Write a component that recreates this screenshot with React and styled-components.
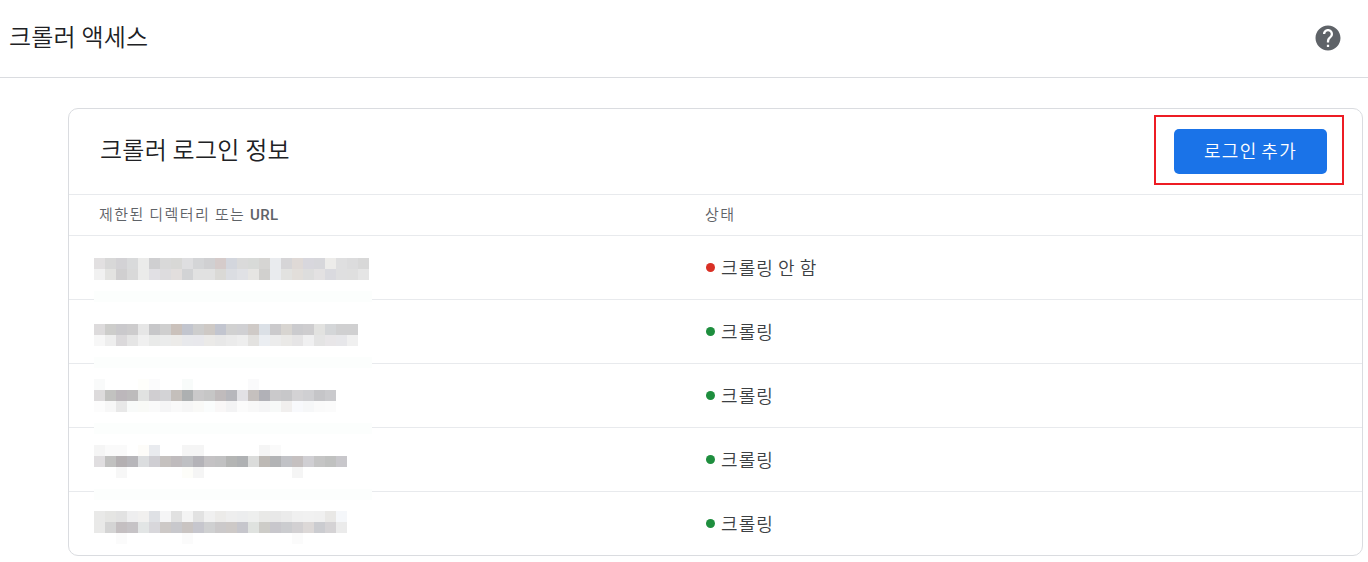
import styled, { createGlobalStyle } from "styled-components";


const GlobalStyle = createGlobalStyle`
  * {
    box-sizing: border-box;
  }
  body {
    margin: 0;
    background: #ffffff;
    color: #202124;
    font-family: "Noto Sans CJK KR", sans-serif;
    font-weight: 350;
    overflow: hidden;
  }
`;

const Pagina = styled.div`
  width: 1368px;
  height: 562px;
`;

const Header = styled.header`
  display: flex;
  align-items: center;
  justify-content: space-between;
  height: 78px;
  padding: 0 25px 2px 9px;
  border-bottom: 1px solid #dadce0;
`;

const Title = styled.h1`
  margin: 0;
  padding-bottom: 4px;
  font-size: 24px;
  font-weight: 350;
  line-height: 36px;
  letter-spacing: 0.2px;
`;

const HelpButton = styled.button`
  display: flex;
  width: 30px;
  height: 30px;
  padding: 0;
  border: none;
  background: none;
`;

const Card = styled.section`
  width: 1295px;
  height: 448px;
  margin: 30px 0 0 68px;
  border: 1px solid #dadce0;
  border-radius: 10px;
`;

const CardHeader = styled.div`
  display: flex;
  align-items: center;
  justify-content: space-between;
  height: 86px;
  padding: 0 18px 0 31px;
  border-bottom: 1px solid #e8eaed;
`;

const CardTitle = styled(Title).attrs({ as: "h2" })`
  padding-bottom: 5px;
  letter-spacing: 0.25px;
`;

const Highlight = styled.div`
  display: flex;
  align-items: center;
  justify-content: center;
  width: 190px;
  height: 70px;
  margin-top: -3px;
  padding: 2px 0 0 3px;
  border: 2px solid #ed1c24;
`;

const AddButton = styled.button`
  width: 153px;
  height: 45px;
  padding: 0 0 2px;
  border: none;
  border-radius: 5px;
  background: #1a73e8;
  color: #ffffff;
  font-family: inherit;
  font-size: 18px;
  font-weight: 350;
  letter-spacing: 1.3px;
  word-spacing: -1.5px;
`;

const Row = styled.div`
  display: grid;
  grid-template-columns: 606px 1fr;
  align-items: center;
  height: 64px;
  padding-left: 30px;
  border-bottom: 1px solid #e8eaed;
  &:last-child {
    height: 63px;
    border-bottom: none;
  }
`;

const HeadRow = styled(Row)`
  height: 41px;
  padding-bottom: 4px;
  color: #5f6368;
  font-size: 15px;
  letter-spacing: 1.4px;
`;

const Latin = styled.span`
  font-family: Roboto, sans-serif;
  font-weight: 500;
  letter-spacing: 0.4px;
`;

const UrlCell = styled.div`
  position: relative;
  align-self: stretch;
`;

/* hidden url, it spills over the divider below the row */
const Mosaic = styled.svg`
  position: absolute;
  top: ${(props) => props.$top}px;
  left: -5px;
`;

const Status = styled.div`
  display: flex;
  align-items: center;
  gap: 6px;
  padding: 0 0 1px 1px;
  color: #3c4043;
  font-size: 18px;
  line-height: 26px;
  letter-spacing: 1.1px;
  word-spacing: -1px;
`;

const StatusText = styled.span`
  padding-bottom: 1px;
`;

const Dot = styled.span`
  width: 9px;
  height: 9px;
  border-radius: 50%;
  background: ${(props) => (props.$active ? "#1e8e3e" : "#d93025")};
`;

const CELL = 11;

const rows = [
  {
    active: false,
    blocks: [
      "",
      "e2e0e1 d8d8d8 d3d2d5 d9dadb ebebea cfcfd1 d9d9d9 d8d8d6 dedee0 d4d5d7 d0d0d2 d5cbca d3d6dd dadada d8dad8 d6d5d3 e9ebee d6d5d7 dfd9d6 d8d7dd d7d7db edecea dfdfe0 dcdcdd d8d8d8",
      "f1f1f1 e3e3e1 d0cfd0 d9d9d9 ebebea e1e0e4 dddcde e2dedd d2d3d5 e1e1e1 e1e1e1 dad9d6 dbdde2 e0e1e5 e6e5e3 d1d0ce e9ebee e2e2e0 e2deda dddddd e3e1e2 dadadf dfdfe0 dfdfdf e5e5e5",
    ],
  },
  {
    active: true,
    blocks: [
      "",
      "dddbdc cdcdcb cac9cc cdcccd e6e6e6 c7c7c9 cfcfcf cac1bb c2c5ce cdcdcd cec9c5 c2c5cf d1d1d1 d0d0d3 cfcac7 dbe0e6 cbcacc d8d5d1 cbcbce cecdcf e2e2e0 d4d6d8 d0d0d1 d0d0d1",
      "f7f7f7 eeeeee dbd9db e5e5e5 f0f0f0 e9eae9 ebecec ecebe9 e8e9ec e8e8ec ebeae8 e8e8e8 ebebeb eeeeee e3e2e0 ebeef2 ececec eae9e7 e6e5e6 f0f0f1 e4e4e4 e8e6e8 e7e7ea f0f0f0",
    ],
  },
  {
    active: true,
    blocks: [
      "f9fafa - - - fefefb fbfbfc - - f8fbfa - - - - - fafafb",
      "dddbdc c2c2c0 bcb7bb bdbbbc e1e2e1 d0ced1 d3d3d6 c4bfbb adb0b1 cac9ca c6c6c6 c0bbbc b7b7bc e2e1e5 c5c0be b1b1b7 cac9cb c7c7c9 d3d2d4 cfcfd2 c5c5c8 cacacd",
      "fcfcfc f7f7f7 e8e8e8 f8faf9 f9faf7 fafafa f5f5f6 f9f9f9 f6f6f6 f9f9f7 fafcfc f9f7f7 f3f3f4 fbfbfb f8f8f8 f5f5f6 f7f9f8 f1efee f8f9fc f6f7f8 fafafa fbfbfb",
    ],
  },
  {
    active: true,
    blocks: [
      "f5f5f5 fafafa fafafa - fdfcf9 e9ebef - - f5f5f5 f5f5f5 - - - - - f5f5f5 fafafa",
      "e0dee0 c1c1c0 b4b0b2 b7b6ba dbdddf cfced3 c5c1bf bfbbbd bfc0c3 b4b3b8 c4c2c4 c1c1c2 b4b5b4 afb1b3 dbdcdb bdb9b5 b2b3b5 c1c2c6 c5c0c0 d0cfd3 c5c5c5 c0c1c0 c8c7cb",
      "- - f7f7f7 - - - - - fdfdf9 f5f5f5 - - - - - - - - f5f5f5",
    ],
  },
  {
    active: true,
    blocks: [
      "e9e9e8 e5e5e3 e2e2e2 eeeeef f1f0ef dfe1e5 f5f5f6 e1e1e1 f4f4f4 e2e2e2 f0f0f0 ecebe9 eeeeee ecedee eeefee e9e9e7 e8e8e8 ebebeb f0f0f0 f1f1f1 f0f0f0 e9e8e6 f5f7fa",
      "e9e9e8 d4d4d4 c4bfc1 c6c3c6 e2e5e5 d8d7db cdc9c7 c8c8cc c9c4c2 c6c6cd cfd0d1 cbc9ca cdc9c7 c6c6cc dfe2df cdccc8 c8c7cc cbcccf d2d0d2 dcd8d7 cbccd0 d5d3d5 ebebeb",
      "- - fbfbfb - - - - - fbfbfb - - - - - - - - - fbfbfb",
    ],
  },
];

function HelpIcon() {
  return (
    <svg width="30" height="30" viewBox="0 0 24 24" fill="#5f6368">
      <path d="M12 2C6.48 2 2 6.48 2 12s4.48 10 10 10 10-4.48 10-10S17.52 2 12 2zm.9 17.2h-1.8v-1.9h1.8v1.9zm2.17-7.95l-.9.92C13.35 13 12.9 13.6 12.9 15.6h-1.8v-.6c0-1.4.35-2.4 1.07-3.13l1.24-1.26c.45-.45.79-1.06.79-1.81 0-1.2-1-2.2-2.2-2.2s-2.2 1-2.2 2.2H8c0-2.21 1.79-4 4-4s4 1.79 4 4c0 .98-.36 1.88-.93 2.45z" />
    </svg>
  );
}

function HiddenUrl({ blocks, index }) {
  const last = index === rows.length - 1;

  return (
    <Mosaic $top={CELL + index * 2} width="278" height={last ? 33 : 55} shapeRendering="crispEdges">
      {!last && <rect y="44" width="278" height="11" fill="#fcfefd" />}
      {blocks.map((line, y) =>
        line.split(" ").map((color, x) =>
          color && color !== "-" ? (
            <rect key={`${x}-${y}`} x={x * CELL} y={y * CELL} width={CELL} height={CELL} fill={`#${color}`} />
          ) : null
        )
      )}
    </Mosaic>
  );
}

function App() {
  return (
    <>
      <GlobalStyle />
      <Pagina>
        <Header>
          <Title>크롤러 액세스</Title>
          <HelpButton aria-label="도움말">
            <HelpIcon />
          </HelpButton>
        </Header>

        <Card>
          <CardHeader>
            <CardTitle>크롤러 로그인 정보</CardTitle>
            <Highlight>
              <AddButton>로그인 추가</AddButton>
            </Highlight>
          </CardHeader>
          <HeadRow>
            <div>
              제한된 디렉터리 또는 <Latin>URL</Latin>
            </div>
            <div>상태</div>
          </HeadRow>
          {rows.map((row, index) => (
            <Row key={index}>
              <UrlCell>
                <HiddenUrl blocks={row.blocks} index={index} />
              </UrlCell>
              <Status>
                <Dot $active={row.active} />
                <StatusText>{row.active ? "크롤링" : "크롤링 안 함"}</StatusText>
              </Status>
            </Row>
          ))}
        </Card>
      </Pagina>
    </>
  );
}

export default App;
